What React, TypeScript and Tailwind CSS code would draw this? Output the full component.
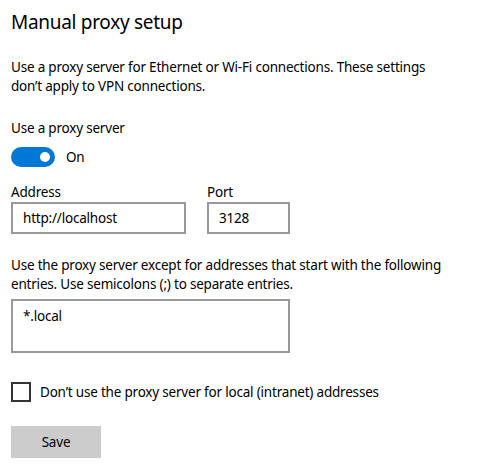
import React, { useState } from 'react';

const App: React.FC = () => {
  const [enabled, setEnabled] = useState(true);
  const [bypassLocal, setBypassLocal] = useState(false);

  return (
    <div
      className="w-[504px] h-[470px] bg-white text-black px-[11px] pt-[8px] text-[13.5px] tracking-[-0.2px]"
      style={{ fontFamily: '"Noto Sans", "Open Sans", sans-serif' }}
    >
      <h1 className="text-[19px] leading-[28px] font-normal tracking-[-0.3px]">Manual proxy setup</h1>

      <p className="mt-[22px] leading-[19px]">
        Use a proxy server for Ethernet or Wi-Fi connections. These settings
        <br />
        don’t apply to VPN connections.
      </p>

      <div className="mt-[22px] leading-[20px]">Use a proxy server</div>

      <div className="mt-[9px] flex items-center gap-[11px]">
        <button
          onClick={() => setEnabled(!enabled)}
          className={`w-[44px] h-[20px] rounded-full flex items-center px-[5px] ${
            enabled ? 'bg-[#0078d7] justify-end' : 'bg-white border-2 border-[#333] justify-start'
          }`}
        >
          <span className={`block w-[10px] h-[10px] rounded-full ${enabled ? 'bg-white' : 'bg-[#333]'}`} />
        </button>
        <span className="leading-[20px]">{enabled ? 'On' : 'Off'}</span>
      </div>

      <div className="mt-[15px] flex gap-[21px]">
        <div className="flex flex-col">
          <label className="leading-[20px]">Address</label>
          <input
            defaultValue="http://localhost"
            className="w-[175px] h-[32px] border-2 border-[#999] px-[10px] outline-none"
          />
        </div>
        <div className="flex flex-col">
          <label className="leading-[20px]">Port</label>
          <input
            defaultValue="3128"
            className="w-[83px] h-[32px] border-2 border-[#999] px-[10px] outline-none"
          />
        </div>
      </div>

      <p className="mt-[22px] leading-[19px]">
        Use the proxy server except for addresses that start with the following
        <br />
        entries. Use semicolons (;) to separate entries.
      </p>

      <textarea
        defaultValue="*.local"
        className="mt-[5px] block w-[279px] h-[54px] border-2 border-[#999] px-[10px] py-[5px] leading-[20px] resize-none outline-none"
      />

      <label className="mt-[29px] flex items-center gap-[9px] cursor-pointer">
        <span
          onClick={() => setBypassLocal(!bypassLocal)}
          className={`w-[20px] h-[20px] border-2 border-[#333] flex items-center justify-center ${
            bypassLocal ? 'bg-[#0078d7] border-[#0078d7]' : ''
          }`}
        >
          {bypassLocal && (
            <svg width="14" height="14" viewBox="0 0 14 14" fill="none" stroke="white" strokeWidth="1.6">
              <path d="M2 7.5l3 3 7-7" />
            </svg>
          )}
        </span>
        <span className="leading-[20px]">Don’t use the proxy server for local (intranet) addresses</span>
      </label>

      <button className="mt-[24px] w-[90px] h-[32px] bg-[#cccccc]">Save</button>
    </div>
  );
};

export default App;
